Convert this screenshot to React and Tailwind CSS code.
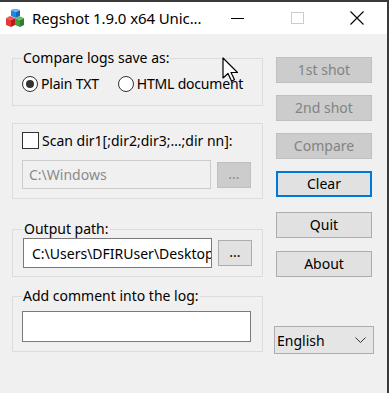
import React from 'react';

function AppIcon() {
  return (
    <svg width="20" height="20" viewBox="0 0 20 20">
      <polygon points="6,1 11,3 11,9 6,7" fill="#1e88e5" />
      <polygon points="11,3 15,1 15,7 11,9" fill="#1565c0" />
      <polygon points="6,1 10,-1 15,1 11,3" fill="#64b5f6" />
      <polygon points="1,9 6,11 6,18 1,16" fill="#e53935" />
      <polygon points="6,11 10,9 10,16 6,18" fill="#b71c1c" />
      <polygon points="1,9 5,7 10,9 6,11" fill="#ef5350" />
      <polygon points="10,9 15,11 15,18 10,16" fill="#43a047" />
      <polygon points="15,11 19,9 19,16 15,18" fill="#2e7d32" />
      <polygon points="10,9 14,7 19,9 15,11" fill="#66bb6a" />
    </svg>
  );
}

function Radio({ checked, label }) {
  return (
    <label className="flex items-center whitespace-nowrap">
      <span className="w-[16px] h-[16px] shrink-0 rounded-full border border-[#333333] bg-white flex items-center justify-center">
        {checked && <span className="w-[8px] h-[8px] rounded-full bg-[#333333]" />}
      </span>
      <span className="ml-[3px] tracking-[-0.2px]">{label}</span>
    </label>
  );
}

function SideButton({ children, disabled, focused, className = '' }) {
  const look = disabled
    ? 'bg-[#cccccc] border border-[#bfbfbf] text-[#838383]'
    : focused
    ? 'bg-[#e1e1e1] border-2 border-[#0078d7] text-black'
    : 'bg-[#e1e1e1] border border-[#adadad] text-black';
  return (
    <button className={`w-[96px] h-[26px] ml-[2px] flex items-center justify-center leading-none ${look} ${className}`}>
      {children}
    </button>
  );
}

export default function App() {
  return (
    <div className="w-[389px] h-[393px] bg-[#3a3a3a] pt-[2px] pr-[2px] overflow-hidden font-['Noto_Sans',sans-serif] text-[14px] text-black">
      <div className="h-full flex flex-col bg-[#f0f0f0] relative">
        {/* title bar */}
        <div className="h-[32px] bg-white flex items-center shrink-0">
          <div className="ml-[5px] mt-[1px]">
            <AppIcon />
          </div>
          <span className="ml-[7px] text-[15px] leading-none whitespace-nowrap tracking-[-0.1px]">Regshot 1.9.0 x64 Unic...</span>
          <div className="ml-auto flex h-full">
            <div className="w-[60px] flex items-center justify-center">
              <span className="w-[13px] h-[1px] bg-black" />
            </div>
            <div className="w-[60px] flex items-center justify-center">
              <span className="w-[13px] h-[12px] border border-[#cccccc]" />
            </div>
            <div className="w-[60px] flex items-center justify-center">
              <svg width="14" height="14" viewBox="0 0 14 14">
                <path d="M0.5 0.5 L13.5 13.5 M13.5 0.5 L0.5 13.5" stroke="#000" strokeWidth="1.1" />
              </svg>
            </div>
          </div>
        </div>

        {/* body */}
        <div className="flex px-[12px] pt-[15px]">
          <div className="w-[251px] shrink-0">
            <fieldset className="border border-[#dcdcdc] px-[9px] pb-[13px]">
              <legend className="px-[1px] leading-[18px] whitespace-nowrap">Compare logs save as:</legend>
              <div className="flex items-center mt-[9px] leading-[16px]">
                <Radio checked label="Plain TXT" />
                <div className="ml-[19px]">
                  <Radio label="HTML document" />
                </div>
              </div>
            </fieldset>

            <div className="mt-[17px] border border-[#dcdcdc] pl-[9px] pt-[8px] pb-[9px]">
              <div className="flex items-center leading-[17px] whitespace-nowrap">
                <span className="w-[17px] h-[17px] shrink-0 border border-[#333333] bg-white" />
                <span className="ml-[3px]">Scan dir1[;dir2;dir3;…;dir nn]:</span>
              </div>
              <div className="flex items-center mt-[11px]">
                <div className="w-[189px] h-[29px] border border-[#cccccc] bg-[#f0f0f0] pl-[6px] flex items-center text-[#8a8a8a] whitespace-nowrap">
                  C:\Windows
                </div>
                <div className="ml-[6px] w-[34px] h-[26px] bg-[#cccccc] border border-[#bfbfbf] text-[#8a8a8a] flex items-center justify-center leading-none pb-[2px]">
                  ...
                </div>
              </div>
            </div>

            <fieldset className="mt-[21px] border border-[#dcdcdc] px-[10px] pb-[8px]">
              <legend className="px-[1px] leading-[18px] whitespace-nowrap">Output path:</legend>
              <div className="flex items-center">
                <div className="w-[189px] h-[30px] shrink-0 border border-[#7a7a7a] bg-white pl-[8px] flex items-center overflow-hidden whitespace-nowrap">
                  <span className="block w-[179px] overflow-hidden">C:\Users\DFIRUser\Desktop</span>
                </div>
                <div className="ml-[6px] w-[34px] h-[26px] shrink-0 bg-[#e1e1e1] border border-[#adadad] flex items-center justify-center leading-none pb-[2px]">
                  ...
                </div>
              </div>
            </fieldset>

            <fieldset className="mt-[10px] border border-[#dcdcdc] px-[9px] pb-[9px]">
              <legend className="px-[1px] leading-[18px] whitespace-nowrap">Add comment into the log:</legend>
              <div className="mt-[6px] w-[229px] h-[31px] border border-[#7a7a7a] bg-white" />
            </fieldset>
          </div>

          <div className="ml-[11px] pt-[8px] flex flex-col">
            <SideButton disabled>1st shot</SideButton>
            <SideButton disabled className="mt-[12px]">2nd shot</SideButton>
            <SideButton disabled className="mt-[12px]">Compare</SideButton>
            <SideButton focused className="mt-[12px]">Clear</SideButton>
            <SideButton className="mt-[15px]">Quit</SideButton>
            <SideButton className="mt-[13px]">About</SideButton>
            <div className="mt-[49px] w-[100px] h-[28px] bg-[#e5e5e5] border border-[#adadad] flex items-center pl-[2px]">
              <span>English</span>
              <svg className="ml-auto mr-[7px]" width="11" height="7" viewBox="0 0 11 7">
                <path d="M0.5 0.5 L5.5 5.5 L10.5 0.5" fill="none" stroke="#333" strokeWidth="1" />
              </svg>
            </div>
          </div>
        </div>

        {/* mouse pointer */}
        <svg className="absolute left-[222px] top-[55px]" width="17" height="26" viewBox="0 0 17 26">
          <path d="M1 1 L1 21 L6 16.5 L9.5 24 L12.5 22.7 L9 15.5 L15.5 15.5 Z" fill="#fff" stroke="#000" strokeWidth="1.2" strokeLinejoin="round" />
        </svg>
      </div>
    </div>
  );
}
